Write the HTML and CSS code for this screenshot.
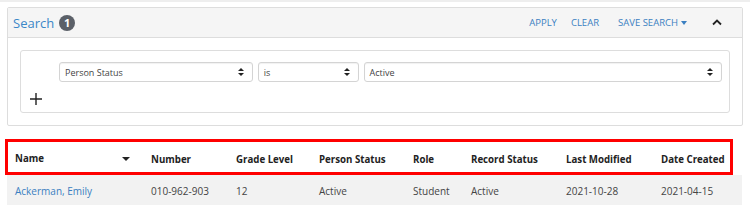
FILE: index.html
```html
<!DOCTYPE html>
<html>
<head>
<meta charset="utf-8">
<link rel="stylesheet" href="styles.css">
</head>
<body>
<div class="topline"></div>
<div class="panel">
  <div class="panel-header">
    <span class="title">Search</span>
    <span class="badge">1</span>
    <div class="actions">
      <a class="act apply">APPLY</a>
      <a class="act clear">CLEAR</a>
      <a class="act save">SAVE SEARCH <span class="caret"></span></a>
      <span class="chev"><svg width="10" height="7" viewBox="0 0 10 7"><path d="M1 5.5 L5 1.5 L9 5.5" fill="none" stroke="#222" stroke-width="1.8"/></svg></span>
    </div>
  </div>
  <div class="panel-body">
    <div class="criteria">
      <div class="crow">
        <div class="sel s1"><span>Person Status</span><span class="updown"></span></div>
        <div class="sel s2"><span>is</span><span class="updown"></span></div>
        <div class="sel s3"><span>Active</span><span class="updown"></span></div>
      </div>
      <div class="plus"><svg width="12" height="12" viewBox="0 0 12 12"><path d="M6 0 V12 M0 6 H12" stroke="#222" stroke-width="1.4"/></svg></div>
    </div>
  </div>
</div>
<div class="table">
  <div class="thead">
    <div class="th name">Name<span class="sortcaret"></span></div>
    <div class="th">Number</div>
    <div class="th">Grade Level</div>
    <div class="th">Person Status</div>
    <div class="th">Role</div>
    <div class="th">Record Status</div>
    <div class="th">Last Modified</div>
    <div class="th">Date Created</div>
  </div>
  <div class="trow">
    <div class="td"><a class="link">Ackerman, Emily</a></div>
    <div class="td">010-962-903</div>
    <div class="td">12</div>
    <div class="td">Active</div>
    <div class="td">Student</div>
    <div class="td">Active</div>
    <div class="td">2021-10-28</div>
    <div class="td">2021-04-15</div>
  </div>
  <div class="highlight"></div>
</div>
</body>
</html>
```

FILE: styles.css
```css
html, body {
  margin: 0;
  padding: 0;
  background: #fff;
  font-family: "Open Sans", "Noto Sans", sans-serif;
  color: #333;
}
.topline {
  height: 2px;
  background: #eee;
}
.panel {
  margin: 5px 7px 0 7px;
  border: 1px solid #ddd;
  border-radius: 2px;
}
.panel-header {
  height: 29px;
  background: #f5f5f5;
  border-bottom: 1px solid #ddd;
  display: flex;
  align-items: center;
  padding-left: 5px;
}
.title {
  font-size: 13px;
  color: #3b87c8;
}
.badge {
  margin-left: 5px;
  width: 16px;
  height: 16px;
  border-radius: 8px;
  background: #5b6068;
  color: #fff;
  font-size: 11px;
  font-weight: 700;
  display: flex;
  align-items: center;
  justify-content: center;
}
.actions {
  margin-left: auto;
  display: flex;
  align-items: center;
}
.act {
  font-size: 9.5px;
  color: #3a7fc1;
}
.apply { margin-right: 14px; }
.clear { margin-right: 19px; }
.save {
  display: flex;
  align-items: center;
}
.caret {
  display: inline-block;
  margin-left: 3px;
  border-left: 3.5px solid transparent;
  border-right: 3.5px solid transparent;
  border-top: 4px solid #3a7fc1;
}
.chev {
  margin-left: 25px;
  margin-right: 20px;
  display: flex;
}
.panel-body {
  padding: 12px 12px 12px 12px;
}
.criteria {
  border: 1px solid #ddd;
  border-radius: 3px;
  padding: 11px 7px 7px 38px;
}
.crow {
  display: flex;
  gap: 5px;
}
.sel {
  height: 18px;
  border: 1px solid #d4d4d4;
  border-radius: 3px;
  box-shadow: inset 0 1px 1px rgba(0,0,0,0.06);
  display: flex;
  align-items: center;
  justify-content: space-between;
  padding: 0 8px 0 5px;
  font-size: 9px;
  color: #444;
  box-sizing: content-box;
}
.s1 { width: 179px; }
.s2 { width: 86px; }
.s3 { width: 344px; }
.updown {
  position: relative;
  width: 6px;
  height: 8px;
}
.updown::before, .updown::after {
  content: "";
  position: absolute;
  left: 0;
  border-left: 3px solid transparent;
  border-right: 3px solid transparent;
}
.updown::before {
  top: 0;
  border-bottom: 3px solid #222;
}
.updown::after {
  bottom: 0;
  border-top: 3px solid #222;
}
.plus {
  margin: 11px 0 0 -29px;
  height: 12px;
  display: flex;
}
.table {
  position: relative;
  margin: 11px 8px 0 7px;
}
.thead, .trow {
  display: grid;
  grid-template-columns: 136px 85px 83px 94px 58px 95px 95px 1fr;
  padding-left: 8px;
}
.thead {
  height: 38px;
  align-items: center;
  padding-top: 6px;
  box-sizing: border-box;
}
.th {
  font-size: 9.7px;
  font-weight: 700;
  color: #222;
}
.th.name {
  display: flex;
  align-items: center;
  align-self: start;
  margin-top: 9px;
}
.sortcaret {
  margin-left: auto;
  margin-right: 21px;
  border-left: 4px solid transparent;
  border-right: 4px solid transparent;
  border-top: 4px solid #222;
}
.trow {
  background: #f2f2f2;
  height: 30px;
  align-items: center;
  padding-top: 2px;
  box-sizing: border-box;
}
.td {
  font-size: 10px;
  color: #444;
}
.link {
  color: #3a7fc1;
}
.highlight {
  position: absolute;
  left: -2px;
  top: 2px;
  width: 722px;
  height: 30px;
  border: 3px solid #f00;
}
```
